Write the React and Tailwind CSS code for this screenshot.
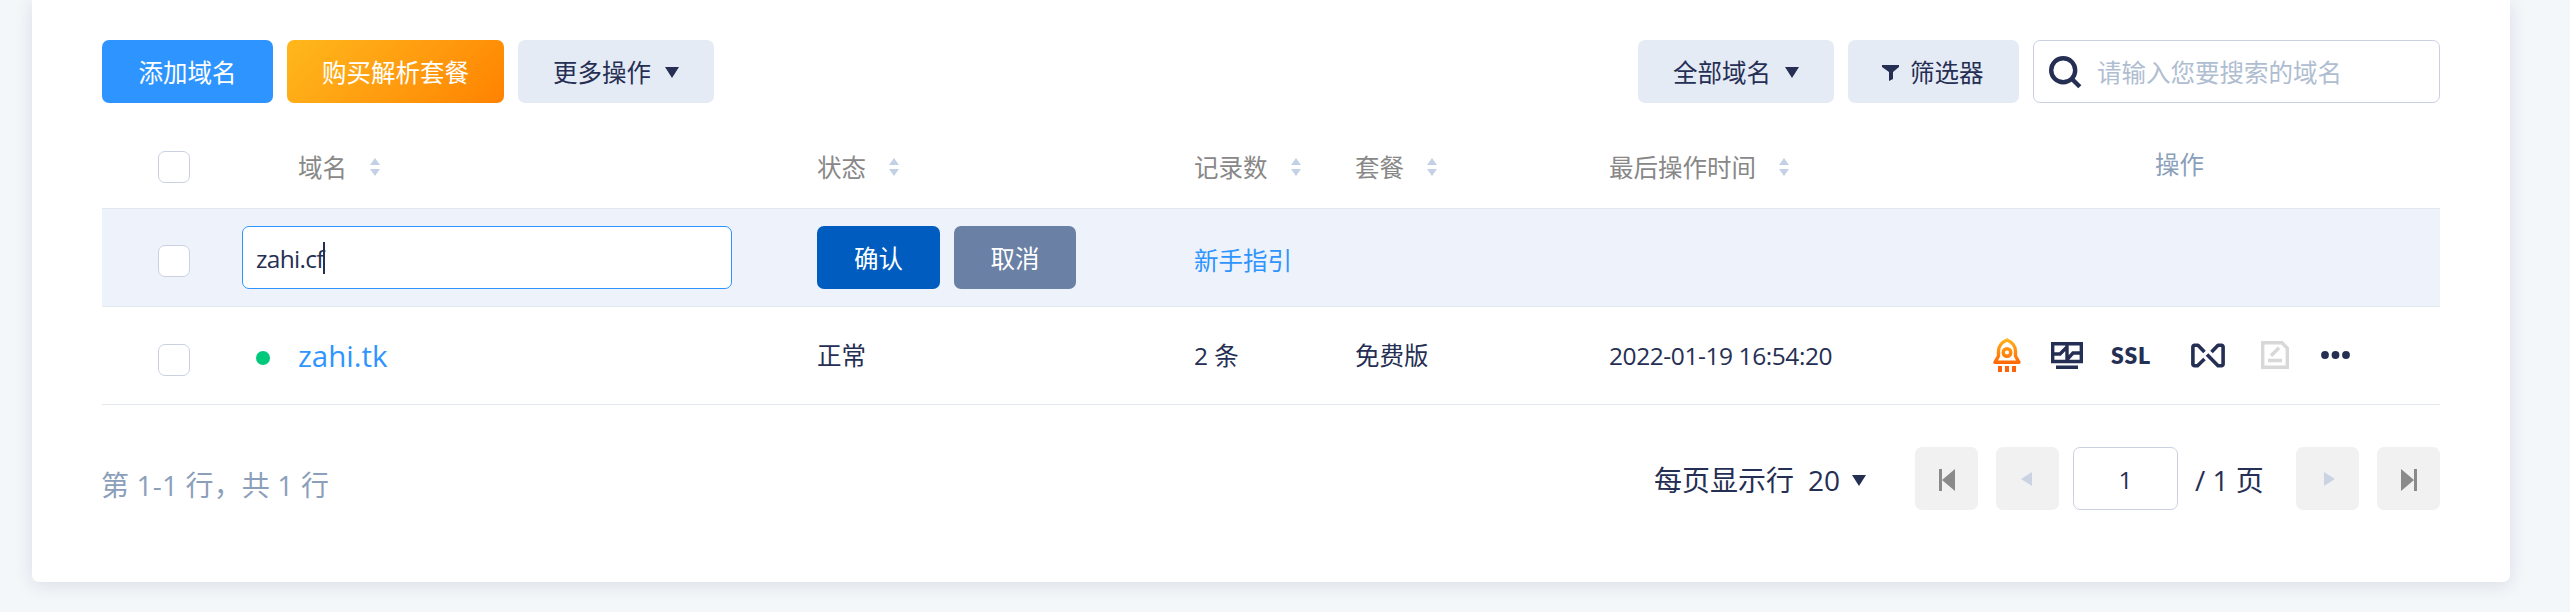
const latin = "font-['Open_Sans','Noto_Sans_CJK_SC',sans-serif]";

function Sort() {
  return (
    <svg className="h-[18px] w-[10px]" viewBox="0 0 10 18" fill="#c3d1e6">
      <path d="M5 0 10 7H0zM0 11h10L5 18z" />
    </svg>
  );
}

function Down({ className = "" }) {
  return (
    <svg className={"h-[11px] w-[14px] shrink-0 " + className} viewBox="0 0 14 11" fill="#252f54">
      <path d="M0 0h14L7 11z" />
    </svg>
  );
}

function Check() {
  return <span className="block h-8 w-8 rounded-[7px] border border-[#cbd1e1] bg-white" />;
}

function Head({ children }) {
  return (
    <div className="flex items-center gap-[23px] text-[#888]">
      <span className="pt-[2px]">{children}</span>
      <Sort />
    </div>
  );
}

function PageButton({ d, color = "#8a8a8a", className = "" }) {
  return (
    <button className={"flex h-[63px] w-[63px] items-center justify-center rounded-[7px] bg-[#f1f1f1] " + className}>
      <svg className="mt-[3px] h-[22px] w-[22px]" viewBox="0 0 22 22" fill={color}>
        <path d={d} />
      </svg>
    </button>
  );
}

const row = "grid grid-cols-[56px_140px_519px_377px_161px_254px_auto] items-center";

export default function App() {
  return (
    <div className={"h-[612px] w-[2570px] overflow-hidden bg-[#f3f7fa] pl-8 text-[24.5px] leading-[36px] text-[#252f54] " + latin}>
      <div className="h-[582px] w-[2478px] rounded-b-[7px] bg-white px-[70px] pt-10 shadow-[0_3px_18px_rgba(40,50,90,0.12)]">
        <div className="flex h-[63px] gap-[14px]">
          <button className="w-[171px] rounded-[7px] bg-[#2e94ff] pt-[2px] text-white">添加域名</button>
          <button className="w-[217px] rounded-[7px] bg-linear-135 from-[#ffb81c] to-[#ff8200] pt-[2px] text-white">购买解析套餐</button>
          <button className="flex w-[196px] items-center rounded-[7px] bg-[#e5ebf5] pt-[2px] pl-[35px]">
            更多操作
            <Down className="ml-[14px]" />
          </button>
          <button className="ml-auto flex w-[196px] items-center rounded-[7px] bg-[#e5ebf5] pt-[2px] pl-[35px]">
            全部域名
            <Down className="ml-[14px]" />
          </button>
          <button className="flex w-[171px] items-center rounded-[7px] bg-[#e5ebf5] pt-[2px] pl-[34px]">
            <svg className="mr-[11px] h-4 w-[17px]" viewBox="0 0 17 16" fill="#252f54">
              <path d="M0 0h17v2l-6 5v7l-4 2V7L0 2z" />
            </svg>
            筛选器
          </button>
          <div className="flex w-[407px] items-center rounded-[7px] border border-[#cbd1e1] pt-[2px] pl-[15px] text-[#afbdd1]">
            <svg className="mr-4 -mt-[1px] h-[33px] w-[33px]" viewBox="0 0 33 33" fill="none" stroke="#252f54" strokeWidth="4.4">
              <circle cx="14.2" cy="14.2" r="12" />
              <path d="m22.500 22.500 8.300 8.300" />
            </svg>
            <span className="-ml-px">请输入您要搜索的域名</span>
          </div>
        </div>

        <div className={row + " h-[106px] border-b border-[#e3e7ee] pt-[22px]"}>
          <div />
          <Check />
          <Head>域名</Head>
          <Head>状态</Head>
          <Head>记录数</Head>
          <Head>套餐</Head>
          <div className="flex">
            <Head>最后操作时间</Head>
            <span className="-mt-[1px] ml-[366px] text-[#8c9fba]">操作</span>
          </div>
        </div>

        <div className="grid h-[98px] grid-cols-[56px_84px_575px_377px_auto] items-center border-b border-[#e3e7ee] bg-[#eef3fb]">
          <div />
          <div className="pt-[7px]"><Check /></div>
          <div className="flex h-[63px] w-[490px] items-center rounded-[7px] border border-[#2e94ff] bg-white pl-[13px]">
            <span className="pt-[2px] tracking-[-0.7px]">zahi.cf</span>
            <span className="-ml-px h-8 w-[2px] bg-[#252f54]" />
          </div>
          <div className="flex h-[63px] gap-[14px] text-white">
            <button className="w-[123px] rounded-[7px] bg-[#005dbf] pt-[2px]">确认</button>
            <button className="w-[122px] rounded-[7px] bg-[#6a80a5] pt-[2px]">取消</button>
          </div>
          <span className="pt-[6px] text-[#2e94ff]">新手指引</span>
        </div>

        <div className="grid h-[98px] grid-cols-[56px_98px_42px_519px_377px_161px_254px_384px_auto] items-center border-b border-[#e3e7ee]">
          <div />
          <div className="pt-[8px]"><Check /></div>
          <span className="mt-[5px] h-[14px] w-[14px] rounded-full bg-[#00c97b]" />
          <span className="text-[29.5px] text-[#2e94ff]">zahi.tk</span>
          <span className="pt-px">正常</span>
          <span className="pt-px">2 条</span>
          <span className="pt-px">免费版</span>
          <span className="pt-px tracking-[-0.42px]">2022-01-19 16:54:20</span>
          <div className="-mt-px flex items-center">
            <svg className="h-[34px] w-[28px]" viewBox="0 0 28 34" fill="none">
              <defs>
                <linearGradient id="flame" x1="0" y1="0" x2="0" y2="30" gradientUnits="userSpaceOnUse">
                  <stop stopColor="#ffb61c" />
                  <stop offset="1" stopColor="#ff5a00" />
                </linearGradient>
              </defs>
              <g stroke="url(#flame)" strokeWidth="3.4" strokeLinejoin="round">
                <path d="M14 2C9 4 5.500 8.500 5.500 13v5L2 24.300h24L22.500 18v-5C22.500 8.500 19 4 14 2z" />
                <circle cx="14" cy="14.500" r="3.800" />
              </g>
              <path d="M5 28h4v6H5zM12 28h4v6h-4zM19 28h4v6h-4z" fill="#ff6208" />
            </svg>
            <svg className="ml-[30px] h-[27px] w-8" viewBox="0 0 32 27" fill="none" stroke="#252f54" strokeWidth="3.4">
              <path d="M1.700 1.700h28.600v17.800H1.700zM5 25.300h22M16 2v18M2 12h7l6.500-6.500M16.500 17l5.500-6h8" />
            </svg>
            <span className="ml-[28px] w-[41px] font-['Lato'] text-[23px] leading-none font-extrabold tracking-[0.7px]">SSL</span>
            <svg className="ml-[39px] h-[25px] w-[34px]" viewBox="0 0 34 25" fill="none" stroke="#252f54" strokeWidth="3.6" strokeLinejoin="round">
              <path d="M13.500 9 7 2.300H3.500a1.500 1.500 0 0 0-1.600 1.600v17.200a1.500 1.500 0 0 0 1.600 1.600H6.500L13.500 16M20.500 9 27 2.300h3.500a1.500 1.500 0 0 1 1.600 1.600v17.200a1.500 1.500 0 0 1-1.600 1.600H27L16 11.500" />
            </svg>
            <svg className="ml-[36px] h-7 w-7" viewBox="0 0 28 28" fill="none" stroke="#d8d8d8" strokeWidth="3.4">
              <path d="M1.700 1.700H21l5.300 5.500v19.100H1.700zM7 19.500h14M10 14.800l8-8" />
            </svg>
            <svg className="ml-8 h-2 w-[29px]" viewBox="0 0 29 8" fill="#252f54">
              <circle cx="4" cy="4" r="3.900" />
              <circle cx="14.500" cy="4" r="3.900" />
              <circle cx="25" cy="4" r="3.900" />
            </svg>
          </div>
        </div>

        <div className="mt-[42px] flex h-[63px] items-center text-[28px]">
          <span className="-ml-px pt-3 tracking-[0.15px] text-[#8c9fba]">第 1-1 行，共 1 行</span>
          <div className="ml-auto flex items-center">
            <span className="pt-[2px]">每页显示行</span>
            <span className="ml-[14px] pt-[2px]">20</span>
            <Down className="mt-[3px] ml-[12px]" />
            <PageButton className="ml-[49px]" d="M3 0h3v22H3zM19 0v22L6 11z" />
            <PageButton className="ml-[18px]" color="#cbd3e3" d="M15 3v14L4 10z" />
            <span className="ml-[14px] flex h-[63px] w-[105px] items-center justify-center rounded-[7px] border border-[#cbd1e1] pt-[2px] text-[24.5px]">1</span>
            <span className="ml-[17px] w-[101px] pt-[2px]">/ 1 页</span>
            <PageButton color="#cbd3e3" d="M7 3v14l11-7z" />
            <PageButton className="ml-[18px]" d="M16 0h3v22h-3zM3 0v22l13-11z" />
          </div>
        </div>
      </div>
    </div>
  );
}
